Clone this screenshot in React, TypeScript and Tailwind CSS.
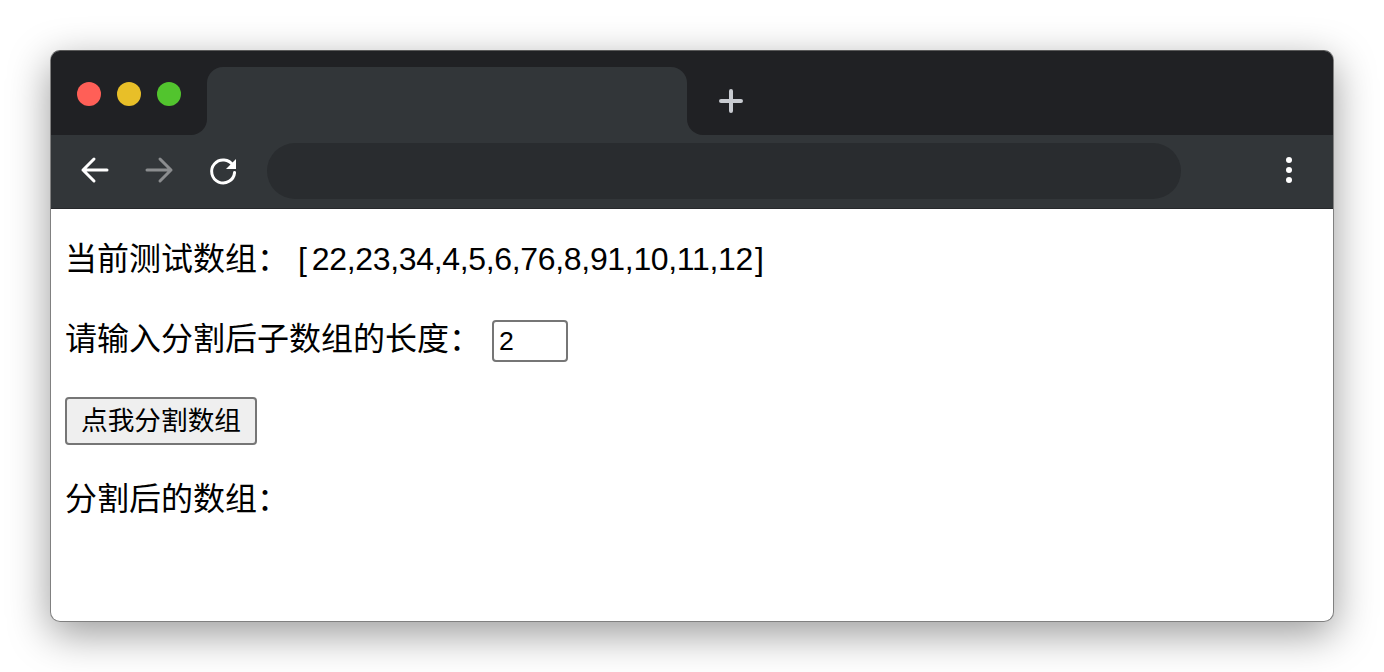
const FONT = "font-['Liberation_Sans','Noto_Sans_CJK_SC',sans-serif]";

const TrafficLight = ({ color }: { color: string }) => (
  <span className={`h-6 w-6 rounded-full ${color}`} />
);

const App = () => {
  return (
    <div className={`h-[672px] w-[1384px] overflow-hidden bg-white p-[50px] ${FONT}`}>
      <div className="flex h-[572px] w-[1284px] flex-col overflow-hidden rounded-[10px] border border-[#808080] border-t-[#5a5a5a] bg-white shadow-[0_12px_42px_rgba(0,0,0,0.4)]">
        {/* tab strip */}
        <div className="flex h-[84px] bg-[#323639]">
          <div className="flex w-[156px] items-center gap-4 rounded-br-[16px] bg-[#202124] pl-[26px] pt-[1px]">
            <TrafficLight color="bg-[#ff5f57]" />
            <TrafficLight color="bg-[#e8bf28]" />
            <TrafficLight color="bg-[#52c42e]" />
          </div>
          <div className="w-[480px] bg-[#202124] pt-4">
            <div className="h-full rounded-t-[16px] bg-[#323639]" />
          </div>
          <div className="flex flex-1 items-center rounded-bl-[16px] bg-[#202124] pl-[32px] pt-[16px]">
            <svg width="24" height="24" viewBox="0 0 24 24" fill="none" stroke="#c8cbd0" strokeWidth="4" strokeLinecap="round">
              <path d="M12 2v20M2 12h20" />
            </svg>
          </div>
        </div>

        {/* toolbar */}
        <div className="flex h-[74px] items-center border-b border-[#26282b] bg-[#323639] pb-[2px] pl-[28px]">
          <svg className="-translate-y-px" width="32" height="32" viewBox="0 0 32 32" fill="none" stroke="#ffffff" strokeWidth="3" strokeLinecap="round" strokeLinejoin="round">
            <path d="M28 16H4M15 5 4 16l11 11" />
          </svg>
          <svg className="ml-[32px] -translate-y-px" width="32" height="32" viewBox="0 0 32 32" fill="none" stroke="#8b8d8f" strokeWidth="3" strokeLinecap="round" strokeLinejoin="round">
            <path d="M4 16h24M17 5l11 11-11 11" />
          </svg>
          <svg className="ml-[32px] -translate-y-px" width="32" height="32" viewBox="0 0 32 32" fill="none">
            <path d="M26 11.5A11.5 11.5 0 1 0 27.6 18.5" stroke="#ffffff" strokeWidth="3" strokeLinecap="round" />
            <path d="M29 5v10H19z" fill="#ffffff" />
          </svg>
          <div className="ml-[28px] h-14 w-[914px] rounded-[28px] bg-[#292c2f]" />
          <div className="ml-[105px] flex -translate-y-px flex-col gap-1">
            <span className="h-[6px] w-[6px] rounded-full bg-white" />
            <span className="h-[6px] w-[6px] rounded-full bg-white" />
            <span className="h-[6px] w-[6px] rounded-full bg-white" />
          </div>
        </div>

        {/* page content */}
        <div className="flex flex-col items-start pl-[14px] pt-[26px] text-[32px] leading-[48px] text-black">
          <p className="whitespace-pre">
            当前测试数组： <span className="mr-[5px]">[</span>
            <span className="tracking-[-0.33px]">22,23,34,4,5,6,76,8,91,10,11,12</span>
            <span className="ml-[2px]">]</span>
          </p>
          <div className="mt-[32px] flex h-[48px] items-center">
            <span className="whitespace-pre">请输入分割后子数组的长度： </span>
            <input
              type="text"
              defaultValue="2"
              className="ml-[2px] mt-[4px] h-[42px] w-[76px] rounded-[4px] border-2 border-[#767676] bg-white px-[5px] text-[26.67px] text-black outline-none"
            />
          </div>
          <button className="mt-[34px] h-[48px] w-[192px] rounded-[4px] border-2 border-[#767676] bg-[#efefef] text-center text-[26.67px] leading-[44px] text-black">
            点我分割数组
          </button>
          <p className="mt-[30px]">分割后的数组：</p>
        </div>
      </div>
    </div>
  );
};

export default App;
